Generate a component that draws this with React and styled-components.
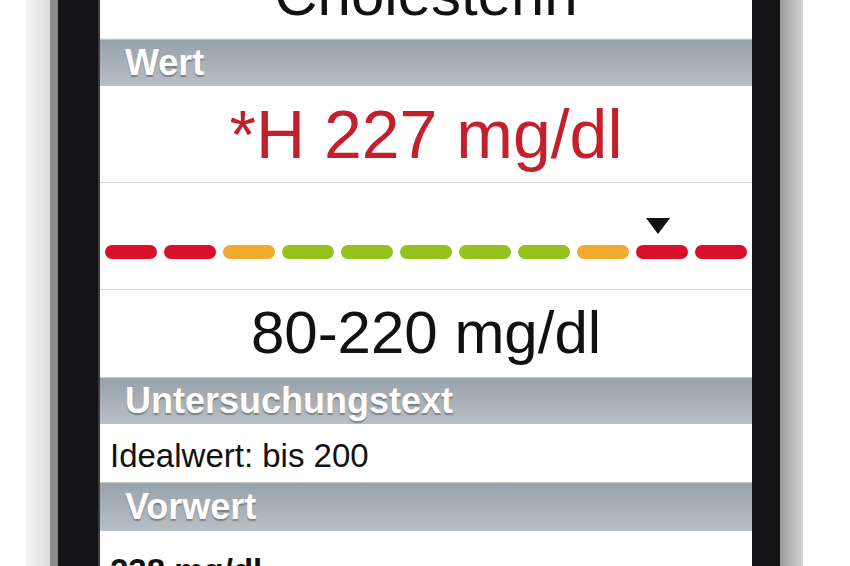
import React from 'react';
import styled, { createGlobalStyle } from 'styled-components';

const GlobalStyle = createGlobalStyle`
  html, body {
    margin: 0;
    padding: 0;
    background: #fff;
  }
  body {
    font-family: "Liberation Sans", Arial, sans-serif;
  }
`;

const Page = styled.div`
  width: 850px;
  height: 566px;
  display: flex;
  overflow: hidden;
  background: #fff;
  padding-left: 26px;
  box-sizing: border-box;
`;

const Rim = styled.div`
  flex: 0 0 ${p => p.$w}px;
  height: 100%;
  background: ${p => p.$bg};
`;

const Screen = styled.div`
  flex: 0 0 652px;
  height: 100%;
  display: flex;
  flex-direction: column;
  overflow: hidden;
  background: #fff;
`;

const TitleRow = styled.div`
  flex: 0 0 39px;
  box-sizing: border-box;
  border-bottom: 1px solid #e3eaee;
  text-align: center;
  font-size: 60px;
  line-height: 60px;
  color: #111;
  span {
    display: block;
    margin-top: -35px;
  }
`;

const SectionHeader = styled.div`
  flex: 0 0 ${p => p.$h || 47}px;
  box-sizing: border-box;
  padding-left: 25px;
  background: linear-gradient(#98a2aa, #b8bfc5);
  border-top: 1px solid #c3cad0;
  color: #fff;
  font-weight: bold;
  font-size: 36px;
  line-height: ${p => (p.$h || 47) - 1}px;
  text-shadow: 0 2px 1px rgba(70, 80, 90, 0.5);
  white-space: nowrap;
`;

const ValueRow = styled.div`
  flex: 0 0 ${p => p.$h}px;
  box-sizing: border-box;
  text-align: center;
  font-size: ${p => p.$size}px;
  line-height: ${p => p.$h - 1}px;
  padding-top: ${p => p.$pt || 0}px;
  color: ${p => p.$color || '#111'};
  border-bottom: ${p => (p.$line ? '1px solid #d6d6d6' : 'none')};
  white-space: nowrap;
`;

const BarRow = styled.div`
  flex: 0 0 107px;
  box-sizing: border-box;
  display: flex;
  align-items: flex-end;
  gap: 7px;
  padding: 0 5px 30px;
  border-bottom: 1px solid #d6d6d6;
`;

const Dash = styled.div`
  position: relative;
  flex: 0 0 52px;
  height: 14px;
  border-radius: 7px;
  background: ${p => p.$color};
`;

const Marker = styled.div`
  position: absolute;
  left: 50%;
  bottom: 25px;
  margin-left: -16px;
  width: 0;
  height: 0;
  border-left: 12px solid transparent;
  border-right: 12px solid transparent;
  border-top: 16px solid #111;
`;

const TextRow = styled.div`
  flex: 0 0 ${p => p.$h}px;
  box-sizing: border-box;
  padding: ${p => p.$pt}px 0 0 10px;
  font-size: 33px;
  line-height: 52px;
  font-weight: ${p => (p.$bold ? 'bold' : 'normal')};
  color: #111;
  white-space: nowrap;
`;

const RED = '#d8102a';
const ORANGE = '#f2aa2e';
const GREEN = '#96c21e';

const scale = [RED, RED, ORANGE, GREEN, GREEN, GREEN, GREEN, GREEN, ORANGE, RED, RED];
const markerAt = 9;

export default function App() {
  return (
    <>
      <GlobalStyle />
      <Page>
        <Rim $w={24} $bg="linear-gradient(90deg, #f6f6f6, #dcdcdc)" />
        <Rim $w={8} $bg="#8c8c8c" />
        <Rim $w={40} $bg="#141416" />
        <Rim $w={2} $bg="#3a3a3c" />
        <Screen>
          <TitleRow><span>Cholesterin</span></TitleRow>
          <SectionHeader>Wert</SectionHeader>
          <ValueRow $h={96} $size={68} $pt={1} $color="#c41f2c" $line>*H 227 mg/dl</ValueRow>
          <BarRow>
            {scale.map((c, i) => (
              <Dash key={i} $color={c}>
                {i === markerAt && <Marker />}
              </Dash>
            ))}
          </BarRow>
          <ValueRow $h={87} $size={60}>80-220 mg/dl</ValueRow>
          <SectionHeader>Untersuchungstext</SectionHeader>
          <TextRow $h={58} $pt={6}>Idealwert: bis 200</TextRow>
          <SectionHeader $h={49}>Vorwert</SectionHeader>
          <TextRow $h={60} $pt={14} $bold>238 mg/dl</TextRow>
        </Screen>
        <Rim $w={28} $bg="#141416" />
        <Rim $w={23} $bg="linear-gradient(90deg, #9a9a9a, #d4d4d4)" />
      </Page>
    </>
  );
}
